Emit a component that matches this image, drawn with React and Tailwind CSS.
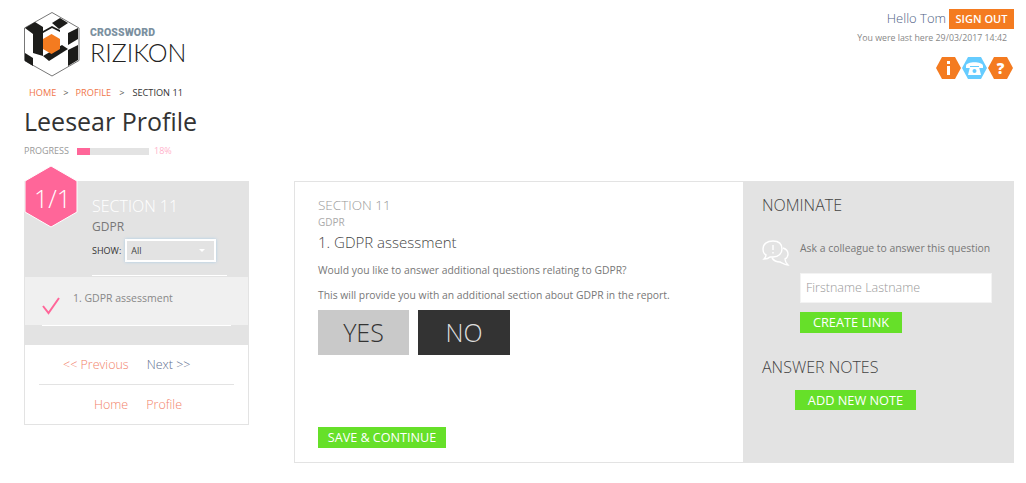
const Hex = ({ fill, children }) => (
  <svg width="27" height="24" viewBox="0 0 27 24">
    <polygon points="7,1 20,1 26,12 20,23 7,23 1,12" fill={fill} />
    {children}
  </svg>
);

const Logo = () => (
  <svg width="56" height="65" viewBox="0 0 56 65">
    <polygon points="28,0.5 55,16 55,48.5 28,64 0.5,48.5 0.5,16" fill="#fff" stroke="#777" strokeWidth="1" />
    <polygon points="1,16 11,10 19,15 19,44 9,41 9,22" fill="#1c1c1a" />
    <polygon points="1,41 9,46 9,54 1,49" fill="#1c1c1a" />
    <polygon points="28,11 36,6 44,11 35,17" fill="#1c1c1a" />
    <polygon points="44,21 54,16 54,27 44,33" fill="#1c1c1a" />
    <polygon points="44,38 54,33 54,48 44,54" fill="#1c1c1a" />
    <polygon points="19,44 38,33 44,37 25,49" fill="#1c1c1a" />
    <polygon points="19,19 28,14 36,18 36,20 28,16 19,21" fill="#1c1c1a" />
    <polygon points="27.5,22 36,27 36,37 27.5,42 19,37 19,27" fill="#f47b20" />
  </svg>
);

export default function App() {
  return (
    <div className="w-[1026px] h-[483px] overflow-hidden bg-white font-['Open_Sans',sans-serif] text-[#333]">
      {/* Header */}
      <div className="flex justify-between h-[85px] pl-6 pr-3">
        <div className="flex items-start pt-[12px]">
          <Logo />
          <div className="ml-[10px] mt-[15px] flex flex-col">
            <span className="font-['Roboto',sans-serif] font-black text-[10.5px] leading-[12px] text-[#7b909f] tracking-[0.1px]">CROSSWORD</span>
            <span className="-mt-[2px] font-['Lato',sans-serif] font-light text-[25px] leading-[30px] text-[#222]">RIZIKON</span>
          </div>
        </div>
        <div className="flex flex-col items-end pt-[9px]">
          <div className="flex items-center">
            <span className="text-[13px] font-light text-[#4f5f85] mr-[3px]">Hello Tom</span>
            <span className="bg-[#f47b20] text-white font-semibold text-[11px] leading-[20px] h-[20px] w-[65px] text-center">SIGN OUT</span>
          </div>
          <div className="text-[8.8px] leading-[14px] text-[#888] mr-[7px] mt-[2px]">You were last here 29/03/2017 14:42</div>
          <div className="flex mt-[11px] -space-x-px">
            <Hex fill="#f47b20">
              <rect x="12" y="10" width="3" height="9" fill="#fff" />
              <rect x="12" y="5" width="3" height="3" fill="#fff" />
            </Hex>
            <Hex fill="#66ccff">
              <path d="M5 10 C5 5 22 5 22 10 L22 12 L18 12 L18 10 L9 10 L9 12 L5 12 Z" fill="#fff" />
              <path d="M9 11 L18 11 L20 19 L7 19 Z" fill="#fff" />
              <circle cx="13.5" cy="15" r="2" fill="#66ccff" />
            </Hex>
            <Hex fill="#f47b20">
              <text x="13.5" y="18" textAnchor="middle" fontSize="15" fontWeight="800" fill="#fff" fontFamily="Open Sans">?</text>
            </Hex>
          </div>
        </div>
      </div>

      {/* Breadcrumb and title */}
      <div className="pl-6">
        <div className="flex text-[9.2px] leading-[16px] font-medium pl-[5px]">
          <span className="text-[#f0764a]">HOME</span>
          <span className="ml-[7px] text-[#555]">&gt;</span>
          <span className="ml-[7px] text-[#f0764a]">PROFILE</span>
          <span className="ml-[8px] text-[#555]">&gt;</span>
          <span className="ml-[8px] text-[#333]">SECTION 11</span>
        </div>
        <h1 className="text-[25px] leading-[34px] mt-[3px] text-[#333]">Leesear Profile</h1>
        <div className="flex items-center mt-[6px] h-[14px]">
          <span className="text-[9px] text-[#999] w-[53px]">PROGRESS</span>
          <div className="w-[72px] h-[7px] bg-[#e3e3e3]">
            <div className="w-[13px] h-[7px] bg-[#ff6699]" />
          </div>
          <span className="text-[9px] text-[#ffb3cc] ml-[5px]">18%</span>
        </div>
      </div>

      {/* Content */}
      <div className="flex items-start pl-6 mt-[23px]">
        {/* Left panel */}
        <div className="relative w-[225px] h-[244px] border border-[#e3e3e3]">
          <svg className="absolute -left-px -top-[17px]" width="54" height="64" viewBox="0 0 54 64">
            <polygon points="27,1 53,16 53,47 27,62 1,47 1,16" fill="#ff6699" stroke="#fff" strokeWidth="1" />
          </svg>
          <span className="absolute left-[9px] top-[1px] text-[25px] leading-[30px] font-light text-white">1/1</span>
          <div className="bg-[#e3e3e3] h-[95px] pl-[67px] pt-[14px]">
            <div className="text-[16px] leading-[20px] font-light text-white">SECTION 11</div>
            <div className="text-[12px] leading-[16px] mt-[3px] text-[#777]">GDPR</div>
            <div className="flex items-center mt-[4px]">
              <span className="text-[9px] text-[#333] font-medium">SHOW:</span>
              <div className="ml-[4px] w-[91px] h-[23px] border-2 border-white shadow-[0_0_3px_#a9cde8] flex items-center justify-between pl-[4px] pr-[9px]">
                <span className="text-[9px] text-[#444]">All</span>
                <span className="w-0 h-0 border-x-[3px] border-x-transparent border-t-[3px] border-t-white" />
              </div>
            </div>
            <div className="mt-[13px] mr-[21px] h-px bg-white" />
          </div>
          <div className="bg-[#f0f0f0] h-[48px] flex">
            <svg className="ml-[17px] mt-[20px]" width="20" height="20" viewBox="0 0 20 20">
              <path d="M1 9 L6.5 16 L17 1" fill="none" stroke="#ff6699" strokeWidth="2" />
            </svg>
            <span className="ml-[11px] mt-[13px] text-[10.5px] leading-[16px] text-[#888]">1. GDPR assessment</span>
          </div>
          <div className="bg-[#e3e3e3] h-[20px]">
            <div className="ml-[17px] mr-[17px] h-px bg-white" />
          </div>
          <div className="mx-[14px] h-[40px] flex items-center border-b border-[#e3e3e3] pt-[1px]">
            <span className="ml-[24px] text-[12.5px] font-light text-[#f2836b]">&lt;&lt; Previous</span>
            <span className="ml-[18px] text-[12.5px] font-light text-[#5f6f8f]">Next &gt;&gt;</span>
          </div>
          <div className="mx-[14px] h-[40px] flex items-center">
            <span className="ml-[55px] text-[12.5px] font-light text-[#f2836b]">Home</span>
            <span className="ml-[18px] text-[12.5px] font-light text-[#f2836b]">Profile</span>
          </div>
        </div>

        {/* Main panel */}
        <div className="ml-[45px] w-[720px] h-[282px] border border-[#e3e3e3] flex">
          <div className="w-[448px] pl-[23px] pt-[13px] flex flex-col">
            <div className="text-[13.5px] leading-[20px] font-light text-[#999]">SECTION 11</div>
            <div className="text-[10px] leading-[14px] text-[#aaa]">GDPR</div>
            <div className="text-[15px] leading-[20px] mt-[3px] font-light text-[#444]">1. GDPR assessment</div>
            <div className="text-[10.35px] leading-[14px] mt-[11px] text-[#777]">Would you like to answer additional questions relating to GDPR?</div>
            <div className="text-[10.35px] leading-[14px] mt-[11px] text-[#777]">This will provide you with an additional section about GDPR in the report.</div>
            <div className="flex mt-[8px]">
              <div className="w-[91px] h-[45px] bg-[#c9c9c9] flex items-center justify-center text-[25px] font-light text-[#333]">YES</div>
              <div className="ml-[9px] w-[92px] h-[45px] bg-[#333] flex items-center justify-center text-[25px] font-light text-[#ddd]">NO</div>
            </div>
            <div className="mt-[72px] w-[128px] h-[21px] bg-[#66e029] text-white text-[12.6px] font-medium leading-[21px] text-center">SAVE &amp; CONTINUE</div>
          </div>
          <div className="flex-1 bg-[#e3e3e3] pl-[19px] pt-[12px]">
            <div className="text-[16px] leading-[22px] font-light text-[#444]">NOMINATE</div>
            <div className="flex mt-[24px]">
              <svg width="28" height="26" viewBox="0 0 28 26" fill="none" stroke="#fff" strokeWidth="1.4">
                <path d="M11 1 C5 1 1 4 1 9 C1 12 2 14 4 15 C4 17 3 18 2 19 C5 19 7 18 8 17 C9 17 10 17 11 17 C17 17 20 13 20 9 C20 4 17 1 11 1 Z" />
                <path d="M21 8 C24 9 26 11 26 14 C26 17 25 18 23 19 C23 21 24 23 26 25 C23 25 20 23 18 22 C15 22 12 21 10 18" />
                <path d="M11 5 V10 M11 12 V13.5" />
              </svg>
              <div className="ml-[10px]">
                <div className="text-[10.4px] leading-[16px] text-[#777]">Ask a colleague to answer this question</div>
                <div className="mt-[17px] w-[192px] h-[30px] bg-white border border-[#f3f3f3] pl-[5px] text-[12.5px] leading-[28px] font-light text-[#999]">Firstname Lastname</div>
                <div className="mt-[9px] w-[102px] h-[21px] bg-[#66e029] text-white text-[12.75px] leading-[21px] text-center">CREATE LINK</div>
              </div>
            </div>
            <div className="mt-[23px] text-[16px] leading-[22px] font-light text-[#444]">ANSWER NOTES</div>
            <div className="mt-[12px] ml-[33px] w-[121px] h-[20px] bg-[#66e029] text-white text-[12.75px] leading-[20px] text-center">ADD NEW NOTE</div>
          </div>
        </div>
      </div>
    </div>
  );
}
